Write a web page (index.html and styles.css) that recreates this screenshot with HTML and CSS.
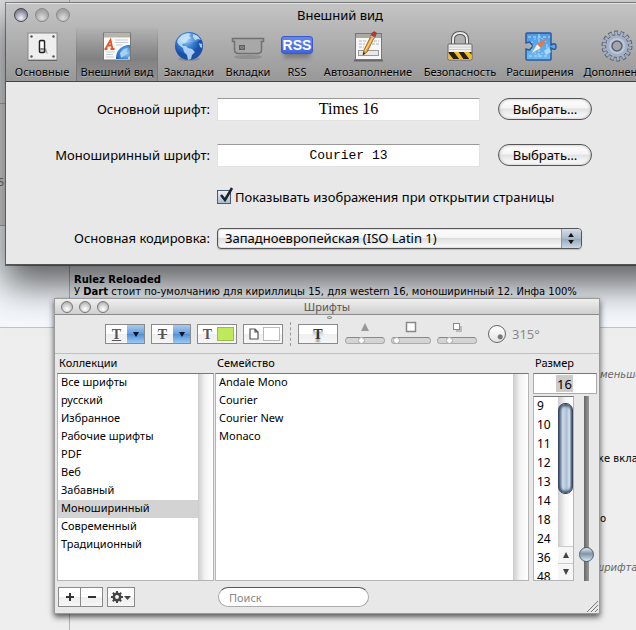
FILE: index.html
```html
<!DOCTYPE html>
<html lang="ru">
<head>
<meta charset="utf-8">
<title>Внешний вид</title>
<link rel="stylesheet" href="styles.css">
</head>
<body>
<main class="forum">
  <div class="forum-top"></div>
  <div class="forum-strip">5</div>
  <article class="post">
    <h2>Rulez Reloaded</h2>
    <p>У <b>Dart</b> стоит по-умолчанию для кириллицы 15, для western 16, моноширинный 12. Инфа 100%</p>
  </article>
  <div class="thread">
    <p class="quote indent">меньше</p>
    <p>же вкладке</p>
    <p class="indent">о</p>
    <p class="quote">шрифта</p>
  </div>
</main>

<section class="window prefs" aria-label="Внешний вид">
  <header class="prefs-head">
    <div class="titlebar">
      <div class="lights">
        <button class="light light-on" aria-label="Закрыть"></button>
        <button class="light" aria-label="Свернуть"></button>
        <button class="light" aria-label="Развернуть"></button>
      </div>
      <h1>Внешний вид</h1>
    </div>
    <nav class="tabs">
      <button class="tab">
        <svg width="32" height="32" viewBox="0 0 32 32"><rect x="2" y="3" width="29" height="27" fill="#eee" stroke="#888"/><path d="M2 30.500h29" stroke="#666"/><g fill="#555"><circle cx="5.500" cy="6.500" r="1.200"/><circle cx="27.500" cy="6.500" r="1.200"/><circle cx="5.500" cy="26.500" r="1.200"/><circle cx="27.500" cy="26.500" r="1.200"/></g><path d="M17 21l5 3-2-6z" fill="#aaa"/><rect x="13.500" y="10.500" width="5" height="12" rx="1" fill="#ddd" stroke="#222" stroke-width="1.500"/><rect x="14.500" y="12" width="3" height="6" fill="#fff"/><path d="M14.500 19h3" stroke="#333"/></svg>
        <span>Основные</span>
      </button>
      <button class="tab tab-on">
        <svg width="32" height="32" viewBox="0 0 32 32"><defs><clipPath id="pg"><rect x="3" y="3" width="26" height="26"/></clipPath><radialGradient id="bl" cx=".4" cy=".3"><stop offset="0" stop-color="#9bccf6"/><stop offset=".5" stop-color="#3f86d8"/><stop offset="1" stop-color="#1a50ac"/></radialGradient></defs><rect x="2.500" y="3" width="27" height="27" fill="#fbfbfb" stroke="#777"/><path d="M3 3.500h26v4H3z" fill="#b4b4ac"/><path d="M4.500 19 9.500 10 11.500 19M6.500 15.500h4.500M3.500 19h3M9.500 19h4" fill="none" stroke="#e65427" stroke-width="1.800"/><path d="M14 10h13M14 12.500h13M15 15h6M5 22h9M5 24.500h7M5 27h8" stroke="#c5cad0"/><g clip-path="url(#pg)"><circle cx="28" cy="28" r="13" fill="url(#bl)"/><path d="M19 23l4-4 4-1-2 4 2 1-4 3-3 2zM27 27l2-1v3h-2z" fill="#a5d2ef"/></g></svg>
        <span>Внешний вид</span>
      </button>
      <button class="tab">
        <svg width="32" height="32" viewBox="0 0 32 32"><ellipse cx="16" cy="29" rx="11" ry="2" fill="#777" opacity=".5"/><circle cx="16" cy="16" r="14" fill="url(#bl)"/><path d="M5 9l4-4 6-2 3 1-2 2 2 2-4 2-1 3-4 1 1 2 3 0 2 2 4 1 3 3-3 3-1 4-3 1-1-5-3-3-1-4-4-3-2-3zM20 4l5 2 3 4-3-1-3 1-2-3zM26 13l3 1 0 4-2-1z" fill="#c2e2f7" opacity=".85"/><path d="M5 10a12 12 0 0 1 22 0 18 12 0 0 1-22 0z" fill="#fff" opacity=".18"/></svg>
        <span>Закладки</span>
      </button>
      <button class="tab">
        <svg width="34" height="32" viewBox="0 0 34 32"><ellipse cx="17" cy="27" rx="14" ry="2" fill="#777" opacity=".45"/><path d="M1.500 8.500h31v3h-2v8q0 4-4 4h-19q-4 0-4-4v-8h-2z" fill="#a8a8a8" stroke="#717171" stroke-width="1.500"/><rect x="8.500" y="15.500" width="5" height="4" fill="#999" stroke="#606060"/><path d="M9 16l4 3M13 16l-4 3" stroke="#666"/></svg>
        <span>Вкладки</span>
      </button>
      <button class="tab">
        <span class="rss">RSS</span>
        <span>RSS</span>
      </button>
      <button class="tab">
        <svg width="32" height="32" viewBox="0 0 32 32"><path d="M2 30.500h29" stroke="#666" stroke-width="2"/><rect x="3.500" y="3.500" width="26" height="26" fill="#f7f7f7" stroke="#777"/><path d="M4 4h25v4H4z" fill="#aaaaa2"/><path d="M7 11h8M22 11h5M7 14h6M20 14h7M7 17h5" stroke="#b5b5b5" stroke-dasharray="3 1"/><rect x="6.500" y="20.500" width="20" height="5" fill="#e8e8e8" stroke="#999"/><path d="M19 6l3 2-7 14-4 3 1-5z" fill="#f3a63a" stroke="#7d5424" stroke-width=".8"/><path d="M21 7l-8 14" stroke="#ffd98c"/><path d="M18.500 6l2-3.500q2-1.500 4 .5l-2 5z" fill="#c8322c" stroke="#555" stroke-width=".8"/><path d="M18.500 6l4 2.200" stroke="#bbb" stroke-width="1.500"/><path d="M11 25l.5-3 1.800 1.200z" fill="#222"/></svg>
        <span>Автозаполнение</span>
      </button>
      <button class="tab">
        <svg width="32" height="32" viewBox="0 0 32 32"><defs><clipPath id="lk"><rect x="4.500" y="22" width="23" height="7"/></clipPath></defs><path d="M9 15V9.500q0-6.500 7-6.500t7 6.500V15" fill="none" stroke="#555" stroke-width="4"/><path d="M9 15V9.500q0-6.500 7-6.500t7 6.500V15" fill="none" stroke="#ececec" stroke-width="2"/><rect x="4" y="14" width="24" height="16" rx="1" fill="#efefef" stroke="#666"/><path d="M5 17h22M5 19.500h22" stroke="#ccc"/><g clip-path="url(#lk)"><path d="M4 22h24v7H4z" fill="#f8ba22"/><path d="M3 21h6l7 9h-6zM14 21h5l7 9h-6zM24 21h5l4 6v3z" fill="#222"/></g></svg>
        <span>Безопасность</span>
      </button>
      <button class="tab">
        <svg width="34" height="32" viewBox="0 0 34 32"><defs><linearGradient id="pz" x2="0" y2="1"><stop offset="0" stop-color="#4e98e6"/><stop offset="1" stop-color="#6cbaf2"/></linearGradient></defs><path d="M3 4q0-1 1-1h23q1 0 1 1v11l2-1q3-1 3 2.500t-3 2.500l-2-1v11q0 1-1 1H4q-1 0-1-1V19l3 1q3-1 3-4t-3-4l-3 1z" fill="url(#pz)" stroke="#2a5a9c" stroke-width="1.500"/><path d="M16 4v25M5 7h22M6 26h20" stroke="#b8def9" stroke-dasharray="3 2"/><circle cx="16" cy="16" r="8" fill="none" stroke="#b8def9" stroke-dasharray="2 2"/><path d="M21 21l5-4 2 5-5 3z" fill="#aad9f6"/><path d="M24 8l-6 10-4-4z" fill="#e67746"/><path d="M8 24l6-10 4 4z" fill="#eef4fa" stroke="#7a99bb" stroke-width=".5"/></svg>
        <span>Расширения</span>
      </button>
      <button class="tab">
        <svg width="32" height="32" viewBox="0 0 32 32"><circle cx="16" cy="16" r="13" fill="none" stroke="#566174" stroke-width="5" stroke-dasharray="3.400 2.435"/><circle cx="16" cy="16" r="11.500" fill="#a3b0c6" stroke="#566174"/><circle cx="16" cy="16" r="12.500" fill="none" stroke="#a3b0c6" stroke-width="4" stroke-dasharray="2.400 3.210" stroke-dashoffset="-.45"/><circle cx="16" cy="16" r="8" fill="#bdc8d9"/><circle cx="16" cy="16" r="5" fill="#a4a5a8" stroke="#566174" stroke-width="1.500"/></svg>
        <span>Дополнения</span>
      </button>
    </nav>
  </header>
  <form class="form">
    <label for="std">Основной шрифт:</label>
    <input id="std" class="sample sample-serif" value="Times 16">
    <button type="button" class="pill">Выбрать…</button>
    <label for="mono">Моноширинный шрифт:</label>
    <input id="mono" class="sample sample-mono" value="Courier 13">
    <button type="button" class="pill">Выбрать…</button>
    <div class="check-row">
      <span class="check"><input type="checkbox" id="img" checked><svg width="17" height="17" viewBox="0 0 17 17"><path d="M4 8l4 5 7-12" fill="none" stroke="#1b2230" stroke-width="2.500"/></svg></span>
      <label for="img">Показывать изображения при открытии страницы</label>
    </div>
    <label for="enc">Основная кодировка:</label>
    <div class="popup">
      <select id="enc"><option>Западноевропейская (ISO Latin 1)</option></select>
      <svg width="20" height="20" viewBox="0 0 20 20"><path d="M6.500 8.500 9.500 4l3 4.500zM6.500 11.500l3 4.500 3-4.500z" fill="#151515"/></svg>
    </div>
  </form>
</section>

<section class="window fonts" aria-label="Шрифты">
  <header class="fonts-title">
    <div class="lights">
      <button class="light light-small" aria-label="Закрыть"></button>
      <button class="light light-small" aria-label="Свернуть"></button>
      <button class="light light-small" aria-label="Развернуть"></button>
    </div>
    <h1>Шрифты</h1>
  </header>
  <div class="effects">
    <button class="effect"><u class="glyph">T</u><span class="arrow"></span></button>
    <button class="effect"><s class="glyph">T</s><span class="arrow"></span></button>
    <button class="effect"><span class="glyph">T</span><span class="swatch swatch-green"></span></button>
    <button class="effect"><span class="glyph"><svg width="10" height="12" viewBox="0 0 10 12"><path d="M1 1h5l3 3v7H1zM6 1v3h3" fill="#fff" stroke="#555" stroke-width="1.200"/></svg></span><span class="swatch"></span></button>
    <span class="divider"></span>
    <div class="shadow-cell">
      <span class="dimple"></span>
      <button class="effect effect-shadow"><b class="glyph glyph-shadow">T</b></button>
    </div>
    <div class="fx">
      <svg width="14" height="12" viewBox="0 0 14 12"><path d="M7 2l4 8H3z" fill="#999"/></svg>
      <input type="range" aria-label="Непрозрачность" value="38">
    </div>
    <div class="fx">
      <svg width="14" height="12" viewBox="0 0 14 12"><rect x="2.500" y="1.500" width="9" height="9" fill="#fff" stroke="#888" stroke-width="1.500"/></svg>
      <input type="range" aria-label="Размытие" value="3">
    </div>
    <div class="fx">
      <svg width="14" height="12" viewBox="0 0 14 12"><path d="M6 5h6v6H6z" fill="#bbb"/><rect x="3.500" y="2.500" width="6" height="6" fill="#fff" stroke="#888"/></svg>
      <input type="range" aria-label="Смещение" value="25">
    </div>
    <span class="dial"></span>
    <output class="angle">315°</output>
  </div>
  <div class="columns">
    <label for="coll">Коллекции</label>
    <label for="fam">Семейство</label>
    <label for="size">Размер</label>
    <div class="list">
      <select id="coll" size="10">
        <option>Все шрифты</option><option>русский</option><option>Избранное</option><option>Рабочие шрифты</option><option>PDF</option><option>Веб</option><option>Забавный</option><option selected>Моноширинный</option><option>Современный</option><option>Традиционный</option>
      </select>
      <span class="track"></span>
    </div>
    <div class="list">
      <select id="fam" size="10">
        <option>Andale Mono</option><option>Courier</option><option>Courier New</option><option>Monaco</option>
      </select>
      <span class="track"></span>
    </div>
    <div class="sizes">
      <div class="size-box"><input id="size" value="16"></div>
      <div class="list">
        <select class="size-list" size="10" aria-label="Размеры">
          <option>9</option><option>10</option><option>11</option><option>12</option><option>13</option><option>14</option><option>18</option><option>24</option><option>36</option><option>48</option>
        </select>
        <div class="scroller">
          <span class="thumb"></span>
          <button class="step step-up" aria-label="Вверх"></button>
          <button class="step step-down" aria-label="Вниз"></button>
        </div>
      </div>
      <input class="size-slider" type="range" aria-label="Размер" value="11">
    </div>
  </div>
  <footer class="actions">
    <div class="pair">
      <button aria-label="Добавить"><svg width="10" height="10" viewBox="0 0 10 10"><path d="M5 1v8M1 5h8" stroke="#333" stroke-width="2"/></svg></button>
      <button aria-label="Удалить"><svg width="10" height="10" viewBox="0 0 10 10"><path d="M1 5h8" stroke="#333" stroke-width="2"/></svg></button>
    </div>
    <button class="gear" aria-label="Действия"><svg width="22" height="14" viewBox="0 0 22 14"><circle cx="7" cy="7" r="3.200" fill="none" stroke="#444" stroke-width="2.500"/><path d="M7 1v3M7 10v3M1 7h3M10 7h3M2.800 2.800l2 2M9.200 9.200l2 2M11.200 2.800l-2 2M4.800 9.200l-2 2" stroke="#444" stroke-width="2"/><path d="M14 6h7l-3.500 4z" fill="#444"/></svg></button>
    <input class="search" type="search" placeholder="Поиск" aria-label="Поиск">
    <svg class="grip" width="11" height="11" viewBox="0 0 11 11"><path d="M0 11 11 0M4 11l7-7M8 11l3-3" stroke="#777"/></svg>
  </footer>
</section>
</body>
</html>
```
FILE: styles.css
```css
* { box-sizing: border-box; }
html, body { height: 100%; }
body {
  margin: 0;
  position: relative;
  overflow: hidden;
  background: #eee;
  color: #000;
  font: 13px/18px "Noto Sans", sans-serif;
}
button, input, select { font: inherit; color: inherit; margin: 0; padding: 0; }
button { border: 0; background: none; }
h1, h2, p { margin: 0; font: inherit; }

/* forum page behind the windows */
.forum { font: 10px/12px "DejaVu Sans", sans-serif; min-height: 100%; background: linear-gradient(#b5b5b5, #b5b5b5) 69px 0 / 1px 100% no-repeat; }
.forum-top { height: 104px; border-bottom: 1px solid #aaa; background: linear-gradient(#a5a5a5, #a5a5a5) 69px 0 / 1px 100% no-repeat, #dcdddf; }
.forum-strip { height: 122px; padding-top: 73px; background: #ddd; border-bottom: 1px solid #aaa; color: #777; text-indent: -2px; }
.post { height: 102px; padding: 48px 0 0 74px; border-bottom: 1px solid #bcc4cc; background: linear-gradient(#b5b5b5, #b5b5b5) 69px 0 / 1px 100% no-repeat, #f4f8fc; white-space: nowrap; }
.post h2 { font-weight: bold; }
.thread { display: grid; grid-template-rows: 84px 60px 49px 20px; padding: 41px 0 0 595px; white-space: nowrap; overflow: hidden; }
.quote { font-style: italic; color: #666; }
.indent { padding-left: 5px; }

.window { position: absolute; background: #e8e8e8; }

/* window buttons */
.lights { display: flex; gap: 7px; }
.light { width: 14px; height: 14px; border-radius: 50%; border: 1px solid #888; background: radial-gradient(circle at 50% 75%, #ddd, #aaa 60%, #999); }
.light-on { border-color: #44464f; background: radial-gradient(circle at 50% 75%, #f2f4fa, #9a9ca8 55%, #555764); }
.light-small { width: 12px; height: 12px; border-color: #777; background: radial-gradient(circle at 50% 70%, #fff, #ccc 55%, #999); }

/* preferences window */
.prefs { left: 6px; right: -38px; top: 3px; border-bottom: 1px solid #555; box-shadow: 0 18px 34px 2px rgba(0, 0, 0, .62), 0 0 0 1px #888; }
.prefs-head { background: linear-gradient(#c4c4c4, #989898); border-top: 1px solid #e2e2e2; border-bottom: 1px solid #444; }
.titlebar { display: grid; grid-template-columns: 80px 1fr 80px; align-items: center; height: 22px; padding: 0 8px; }
.titlebar h1 { text-align: center; }
.tabs { display: grid; grid-template-columns: 68px 82px 62px 56px 42px 100px 84px 76px 78px; padding-left: 2px; height: 55px; }
.tab { display: flex; flex-direction: column; align-items: center; padding-top: 2px; font-size: 11px; line-height: 16px; white-space: nowrap; text-shadow: 0 1px 0 rgba(255, 255, 255, .35); }
.tab svg, .rss { flex: none; }
.tab svg { margin: 2px 0; }
.tab-on { background: linear-gradient(rgba(80, 80, 80, 0), rgba(80, 80, 80, .42) 60%, rgba(80, 80, 80, .1)); border: solid; border-width: 0 1px; border-image: linear-gradient(transparent, #777) 1; }
.rss { width: 32px; height: 18px; margin: 8px 0 10px; border-radius: 3px; border: 1px solid #3b58c4; background: linear-gradient(#6487ee, #4265df); color: #fff; font: bold 14px/16px "Liberation Sans", sans-serif; text-align: center; text-shadow: none; box-shadow: 0 7px 4px -3px rgba(70, 70, 70, .45); }

.form { display: grid; grid-template-columns: 204px 1fr 94px; grid-auto-rows: 22px; row-gap: 24px; align-items: center; padding: 16px 82px 6px 0; }
.form > label { text-align: right; }
.sample { height: 23px; margin: 0 18px 0 7px; min-width: 0; border: 1px solid #e2e2e2; border-top-color: #999; background: #fff; text-align: center; }
.sample-serif { font: 16px "Liberation Serif", serif; }
.sample-mono { font: 13px "Liberation Mono", monospace; }
.pill { height: 22px; border: 1px solid #555; border-radius: 11px; background: linear-gradient(#fff, #f4f4f4 45%, #e2e2e2 50%, #fff); box-shadow: inset 0 0 3px #aaa; line-height: 18px; }
.check-row { grid-column: 2 / -1; display: flex; align-items: center; gap: 4px; padding-left: 7px; margin-top: -8px; white-space: nowrap; }
.check { position: relative; display: flex; }
.check input { appearance: none; width: 14px; height: 14px; border: 1px solid #4c5a6c; background: linear-gradient(#eef1f5, #aebccd); }
.check svg { position: absolute; left: 0; top: -3px; pointer-events: none; }
.popup { grid-column: 2 / -1; position: relative; display: flex; margin: -18px 10px 0 7px; }
.form > label[for="enc"] { margin-top: -18px; }
.popup select { appearance: none; width: 100%; height: 21px; padding: 0 7px; border: 1px solid #555; border-radius: 4px; background: linear-gradient(#fff, #f4f4f4 45%, #dedede 50%, #fdfdfd); box-shadow: inset 0 0 2px #999, 0 1px 1px #bbb; line-height: 18px; }
.popup svg { position: absolute; right: 1px; top: 1px; height: 19px; border-left: 1px solid #8a99ab; border-radius: 0 3px 3px 0; background: linear-gradient(#d5dde8, #a9b8c9 50%, #93a6bb 52%, #ccd9e4); pointer-events: none; }

/* fonts window */
.fonts { left: 54px; top: 298px; width: 546px; border: 1px solid #999; box-shadow: 0 3px 6px rgba(0, 0, 0, .65); font-size: 11px; line-height: 18px; }
.fonts-title { display: grid; grid-template-columns: 80px 1fr 80px; align-items: center; height: 16px; padding: 0 6px; background: linear-gradient(#efefef, #cfcfcf); border-bottom: 1px solid #8a8a8a; color: #555; }
.fonts-title .lights { gap: 6px; }
.fonts-title h1 { text-align: center; line-height: 15px; }
.effects { display: flex; align-items: center; gap: 6px; height: 39px; padding-left: 50px; border-bottom: 1px solid #c0c0c0; }
.effect { display: flex; align-items: center; justify-content: space-between; width: 40px; height: 20px; flex: none; border: 1px solid #8a8a8a; background: linear-gradient(#fff 50%, #eee 50%, #f6f6f6); }
.glyph { display: flex; justify-content: center; flex: 1; font: 14px/15px "Liberation Serif", serif; font-weight: bold; color: #555; }
u.glyph, s.glyph { display: block; text-align: center; }
.glyph-shadow { color: #333; text-shadow: 0 3px 2px #888; }
.arrow { width: 17px; height: 18px; display: grid; place-items: center; background: linear-gradient(#a9caee, #649fdf 50%, #4f90d8 52%, #9ccaf2); }
.arrow::before { content: ""; border: solid transparent; border-width: 5px 3px 0; border-top-color: #112; }
.swatch { width: 17px; height: 14px; margin-right: 2px; border: 1px solid #bbb; background: #fff; }
.swatch-green { background: #bde95a; border-color: #9abf4d; }
.divider { height: 24px; margin: 0 1px; border-left: 1px dashed #999; }
.shadow-cell { position: relative; }
.dimple { position: absolute; left: 29px; top: -8px; width: 5px; height: 3px; border: 1px solid #888; border-radius: 50%; }
.fx { display: flex; flex-direction: column; align-items: center; gap: 4px; width: 40px; margin-left: 1px; margin-right: -1px; padding-bottom: 4px; }
.fx input { appearance: none; width: 40px; height: 7px; border-radius: 4px; background: #d4d4d4; border: 1px solid #aaa; border-top-color: #888; }
.fx input::-webkit-slider-thumb { appearance: none; width: 7px; height: 7px; border-radius: 50%; background: #fff; border: 1px solid #aaa; }
.dial { width: 18px; height: 18px; margin-left: 6px; border: 1px solid #666; border-radius: 50%; background: radial-gradient(circle at 70% 68%, #777 2px, transparent 3px), linear-gradient(#fff, #e4e4e4); }
.angle { color: #888; font-size: 13px; }

.columns { display: grid; grid-template-columns: 157px 314px 64px; grid-template-rows: 19px 208px; column-gap: 1px; padding: 0 2px; }
.columns > label { padding-left: 2px; }
.columns > label:nth-child(3) { padding-left: 5px; }
.list { display: flex; min-width: 0; height: 208px; border: 1px solid #b5b5b5; border-top-color: #777; background: #fff; }
.list select { appearance: none; flex: 1; min-width: 0; height: 100%; border: 0; outline: 0; background: #fff; overflow: hidden; }
.list option { min-height: 18px; padding: 0 3px; font-size: 11px; line-height: 18px; }
.list option:checked { background: linear-gradient(#d3d3d3, #d3d3d3); -webkit-text-fill-color: #000; }
.track { width: 15px; background: linear-gradient(90deg, #ccc, #f2f2f2 45%, #fff); }
.sizes { display: grid; grid-template-columns: 41px 1fr; grid-template-rows: 21px 185px; row-gap: 2px; margin: 0 -4px 0 3px; }
.size-box { grid-column: 1 / -1; display: flex; justify-content: flex-end; margin-right: 1px; padding-right: 23px; border: 1px solid #aaa; border-top-color: #777; background: #fff; }
.size-box input { width: 17px; height: 17px; margin-top: 1px; border: 0; background: #ccc; text-align: center; font-size: 13px; }
.sizes .list { height: 185px; }
.size-list option { min-height: 19px; line-height: 19px; font-size: 12px; }
.scroller { display: flex; flex-direction: column; width: 15px; padding-top: 6px; background: linear-gradient(90deg, #ccc, #f6f6f6 50%, #fff); }
.thumb { height: 91px; margin-bottom: auto; border: 1px solid #35465e; border-radius: 7px; background: linear-gradient(90deg, #5c708e, #cddcec 30%, #a8bcd3 60%, #dbe7f2 80%, #6d829e); box-shadow: inset 0 2px 3px #3e4f69, inset 0 -2px 3px #3e4f69; }
.step { display: grid; place-items: center; height: 17px; border-top: 1px solid #ccc; background: #f6f6f6; }
.step::before { content: ""; border: 3px solid transparent; }
.step-up::before { border-top-width: 0; border-bottom: 6px solid #444; }
.step-down::before { border-bottom-width: 0; border-top: 6px solid #444; }
.size-slider { appearance: none; writing-mode: vertical-lr; direction: rtl; justify-self: center; width: 15px; height: 185px; background: linear-gradient(90deg, #666, #999) center / 5px 100% no-repeat; }
.size-slider::-webkit-slider-thumb { appearance: none; width: 15px; height: 15px; border: 1px solid #4d5d6d; border-radius: 50%; background: linear-gradient(#dfe8f0, #8095a8 45%, #d9e9f5); }

.actions { position: relative; display: flex; align-items: center; height: 32px; padding-left: 3px; }
.pair { display: flex; }
.pair button, .gear { display: grid; place-items: center; width: 23px; height: 20px; border: 1px solid #8a8a8a; background: linear-gradient(#fff 50%, #eee 50%, #f6f6f6); }
.pair button + button { margin-left: -1px; }
.gear { width: 28px; margin-left: 4px; }
.search { appearance: none; width: 151px; height: 20px; margin-left: 83px; padding: 0 10px; border: 1px solid #aaa; border-top-color: #555; border-radius: 10px; background: #fff; outline: 0; }
.search::placeholder { color: #888; }
.grip { position: absolute; right: 1px; bottom: 1px; }
```
